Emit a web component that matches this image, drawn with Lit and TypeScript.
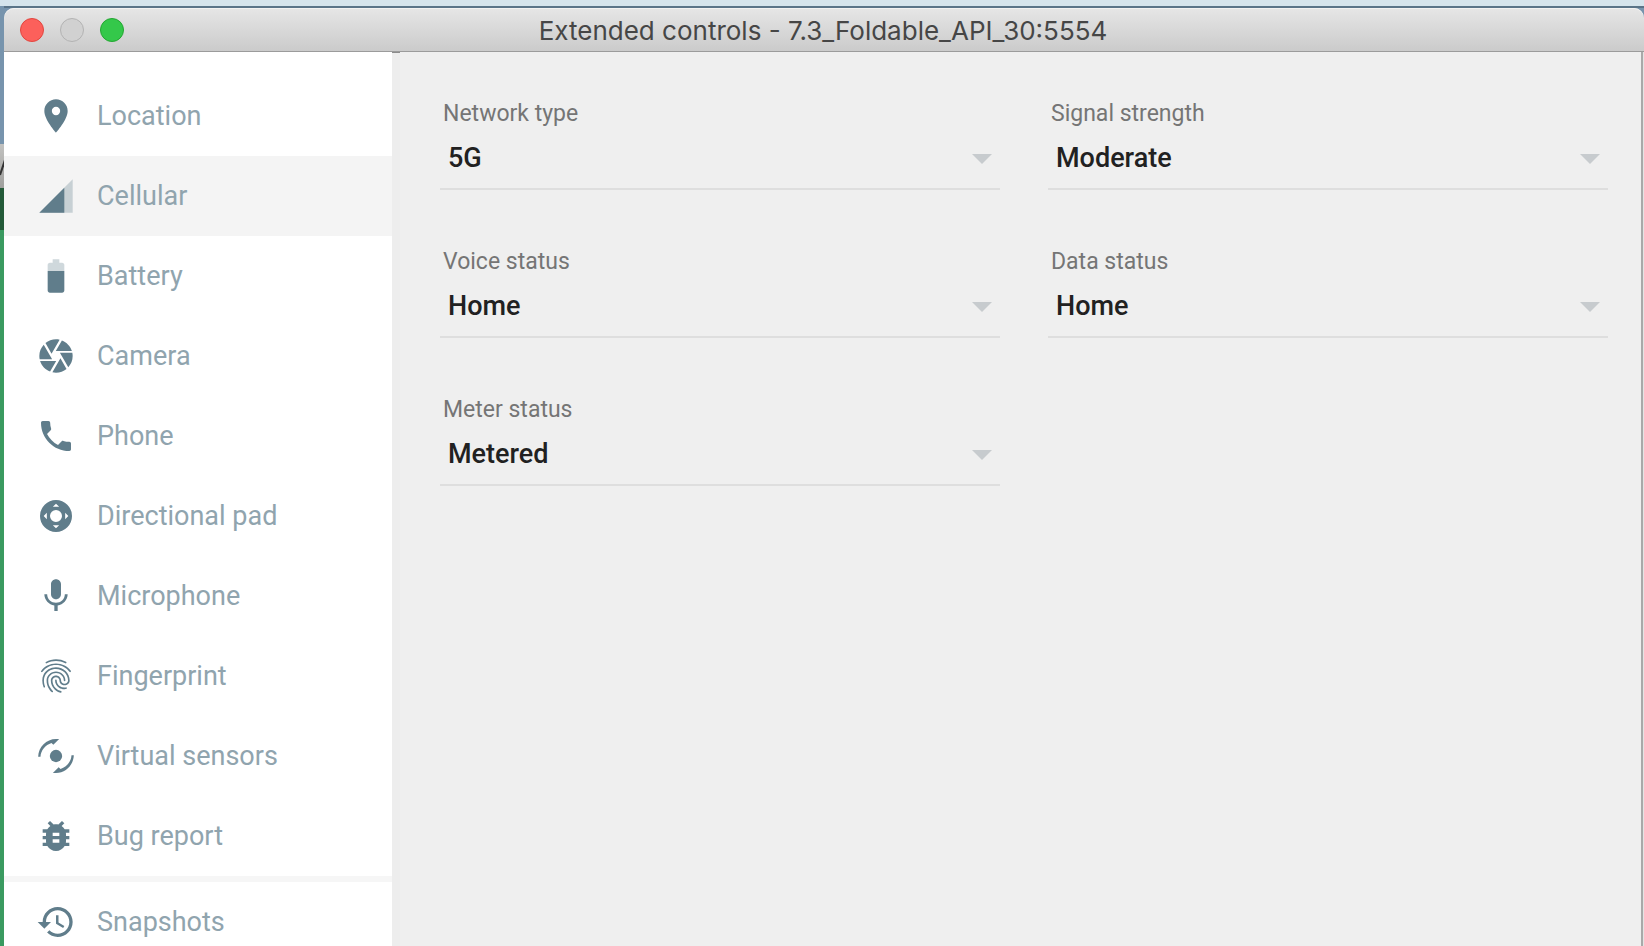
import { LitElement, html, css, svg } from "lit";
import { customElement, property, state } from "lit/decorators.js";

const icons: Record<string, unknown> = {
  location: svg`<path d="M12 2C8.13 2 5 5.13 5 9c0 5.25 7 13 7 13s7-7.75 7-13c0-3.87-3.13-7-7-7zm0 9.5a2.5 2.5 0 0 1 0-5 2.5 2.5 0 0 1 0 5z"/>`,
  cellular: svg`<path opacity=".3" d="M2 22h20V2z"/><path d="M17 7L2 22h15z"/>`,
  battery: svg`<path opacity=".3" d="M17 5.33C17 4.6 16.4 4 15.67 4H14V2h-4v2H8.33C7.6 4 7 4.6 7 5.33V9h10V5.33z"/><path d="M7 9v11.67C7 21.4 7.6 22 8.33 22h7.33c.74 0 1.34-.6 1.34-1.33V9H7z"/>`,
  camera: svg`<path d="M9.4 10.5l4.77-8.26C13.47 2.09 12.75 2 12 2c-2.4 0-4.6.85-6.32 2.25l3.66 6.35.06-.1zM21.54 9c-.92-2.92-3.15-5.26-6-6.34L11.88 9h9.66zm.26 1h-7.49l.29.5 4.76 8.25C21 16.97 22 14.61 22 12c0-.69-.07-1.35-.2-2zM8.54 12l-3.9-6.75C3.01 7.03 2 9.39 2 12c0 .69.07 1.35.2 2h7.49l-1.15-2zm-6.08 3c.92 2.92 3.15 5.26 6 6.34L12.12 15H2.46zm11.27 0l-3.9 6.76c.7.15 1.42.24 2.17.24 2.4 0 4.6-.85 6.32-2.25l-3.66-6.35-.93 1.6z"/>`,
  phone: svg`<path d="M6.62 10.79c1.44 2.83 3.76 5.14 6.59 6.59l2.2-2.2c.27-.27.67-.36 1.02-.24 1.12.37 2.33.57 3.57.57.55 0 1 .45 1 1V20c0 .55-.45 1-1 1-9.39 0-17-7.61-17-17 0-.55.45-1 1-1h3.5c.55 0 1 .45 1 1 0 1.25.2 2.45.57 3.57.11.35.03.74-.25 1.02l-2.2 2.2z"/>`,
  dpad: svg`<path fill-rule="evenodd" d="M12 2.4a9.6 9.6 0 1 0 0 19.2 9.6 9.6 0 0 0 0-19.2zm0 6a3.6 3.6 0 1 1 0 7.2 3.6 3.6 0 0 1 0-7.2zM12 4.6l1.9 1.9h-3.8zM12 19.4l1.9-1.9h-3.8zM4.6 12l1.9-1.9v3.8zM19.4 12l-1.9-1.9v3.8z"/>`,
  mic: svg`<path d="M12 14c1.66 0 2.99-1.34 2.99-3L15 5c0-1.66-1.34-3-3-3S9 3.34 9 5v6c0 1.66 1.34 3 3 3zm5.3-3c0 3-2.54 5.1-5.3 5.1S6.7 14 6.7 11H5c0 3.41 2.72 6.23 6 6.72V21h2v-3.28c3.28-.48 6-3.3 6-6.72h-1.7z"/>`,
  fingerprint: svg`<path d="M17.81 4.47c-.08 0-.16-.02-.23-.06C15.66 3.42 14 3 12.01 3c-1.98 0-3.86.47-5.57 1.41-.24.13-.54.04-.68-.2-.13-.24-.04-.55.2-.68C7.82 2.52 9.86 2 12.01 2c2.13 0 3.99.47 6.03 1.52.25.13.34.43.21.67-.09.18-.26.28-.44.28zM3.5 9.72c-.1 0-.2-.03-.29-.09-.23-.16-.28-.47-.12-.7.99-1.4 2.25-2.5 3.75-3.27C9.98 4.04 14 4.03 17.15 5.65c1.5.77 2.76 1.86 3.75 3.25.16.22.11.54-.12.7-.23.16-.54.11-.7-.12-.9-1.26-2.04-2.25-3.39-2.94-2.87-1.47-6.54-1.47-9.4.01-1.36.7-2.5 1.7-3.4 2.96-.08.14-.23.21-.39.21zm6.25 12.07c-.13 0-.26-.05-.35-.15-.87-.87-1.34-1.43-2.01-2.64-.69-1.23-1.05-2.73-1.05-4.34 0-2.97 2.54-5.39 5.66-5.39s5.66 2.42 5.66 5.39c0 .28-.22.5-.5.5s-.5-.22-.5-.5c0-2.42-2.09-4.39-4.66-4.39-2.57 0-4.66 1.97-4.66 4.39 0 1.44.32 2.77.93 3.85.64 1.15 1.08 1.64 1.85 2.42.19.2.19.51 0 .71-.11.1-.24.15-.37.15zm7.17-1.85c-1.19 0-2.24-.3-3.1-.89-1.49-1.01-2.38-2.65-2.38-4.39 0-.28.22-.5.5-.5s.5.22.5.5c0 1.41.72 2.74 1.94 3.56.71.48 1.54.71 2.54.71.24 0 .64-.03 1.04-.1.27-.05.53.13.58.41.05.27-.13.53-.41.58-.57.11-1.07.12-1.21.12zM14.91 22c-.04 0-.09-.01-.13-.02-1.59-.44-2.63-1.03-3.72-2.1-1.4-1.39-2.17-3.24-2.17-5.22 0-1.62 1.38-2.94 3.08-2.94 1.7 0 3.08 1.32 3.08 2.94 0 1.07.93 1.94 2.08 1.94s2.08-.87 2.08-1.94c0-3.77-3.25-6.83-7.25-6.83-2.84 0-5.44 1.58-6.61 4.03-.39.81-.59 1.76-.59 2.8 0 .78.07 2.01.67 3.61.1.26-.03.55-.29.64-.26.1-.55-.04-.64-.29-.49-1.31-.73-2.61-.73-3.96 0-1.2.23-2.29.68-3.24 1.33-2.79 4.28-4.6 7.51-4.6 4.55 0 8.25 3.51 8.25 7.83 0 1.62-1.38 2.94-3.08 2.94s-3.08-1.32-3.08-2.94c0-1.07-.93-1.94-2.08-1.94s-2.08.87-2.08 1.94c0 1.71.66 3.31 1.87 4.51.95.94 1.86 1.46 3.27 1.85.27.07.42.35.35.61-.05.23-.26.38-.47.38z"/>`,
  sensors: svg`<circle cx="12" cy="12" r="3.7"/><path d="M1.300 12.400C1.500 6.600 6.200 1.800 12 1.800h1.900L10.400 5.300 9.300 4.200C5.600 5.400 2.900 8.600 2.700 12.400z"/><path d="M22.700 11.600C22.500 17.400 17.800 22.200 12 22.200h-1.900L13.600 18.700l1.100 1.100C18.400 18.600 21.100 15.400 21.300 11.600z"/>`,
  bug: svg`<path d="M20 8h-2.81c-.45-.78-1.07-1.45-1.82-1.96L17 4.41 15.59 3l-2.17 2.17C12.96 5.06 12.49 5 12 5c-.49 0-.96.06-1.41.17L8.41 3 7 4.41l1.62 1.63C7.88 6.55 7.26 7.22 6.81 8H4v2h2.09c-.05.33-.09.66-.09 1v1H4v2h2v1c0 .34.04.67.09 1H4v2h2.81c1.04 1.79 2.97 3 5.19 3s4.15-1.21 5.19-3H20v-2h-2.09c.05-.33.09-.66.09-1v-1h2v-2h-2v-1c0-.34-.04-.67-.09-1H20V8zm-6 8h-4v-2h4v2zm0-4h-4v-2h4v2z"/>`,
  history: svg`<path d="M13 3c-4.97 0-9 4.03-9 9H1l3.89 3.89.07.14L9 12H6c0-3.87 3.13-7 7-7s7 3.13 7 7-3.13 7-7 7c-1.93 0-3.68-.79-4.94-2.06l-1.42 1.42C8.27 19.99 10.51 21 13 21c4.97 0 9-4.03 9-9s-4.03-9-9-9zm-1 5v5l4.28 2.54.72-1.21-3.5-2.08V8H12z"/>`,
};

const pages = [
  ["location", "Location"],
  ["cellular", "Cellular"],
  ["battery", "Battery"],
  ["camera", "Camera"],
  ["phone", "Phone"],
  ["dpad", "Directional pad"],
  ["mic", "Microphone"],
  ["fingerprint", "Fingerprint"],
  ["sensors", "Virtual sensors"],
  ["bug", "Bug report"],
  ["history", "Snapshots"],
];

const fields = [
  { id: "network", label: "Network type", value: "5G" },
  { id: "signal", label: "Signal strength", value: "Moderate" },
  { id: "voice", label: "Voice status", value: "Home" },
  { id: "data", label: "Data status", value: "Home" },
  { id: "meter", label: "Meter status", value: "Metered" },
];

@customElement("title-bar")
class TitleBar extends LitElement {
  @property() heading = "";
  static styles = css`
    :host {
      box-sizing: border-box;
      flex: none;
      display: grid;
      grid-template-columns: 1fr auto 1fr;
      align-items: center;
      height: 44px;
      padding: 0 18px 0 16px;
      border-bottom: 1px solid #9b9b9b;
      border-radius: 10px 10px 0 0;
      background: linear-gradient(#e6e6e6, #cbcbcb);
      box-shadow: inset 0 1px #f2f2f2;
    }
    .lights {
      display: flex;
      gap: 16px;
    }
    .light {
      box-sizing: border-box;
      width: 24px;
      height: 24px;
      padding: 0;
      border: 1px solid;
      border-radius: 50%;
    }
    .close { background: #fc605b; border-color: #e2463f; }
    .minimize { background: #d1d1d1; border-color: #b3b3b3; }
    .zoom { background: #34c84a; border-color: #24a732; }
    .heading {
      margin: 0;
      padding-top: 2px;
      color: #464646;
      font: 400 26px/32px Inter, sans-serif;
      white-space: nowrap;
    }
  `;
  render() {
    return html`
      <div class="lights">
        <button class="light close" aria-label="Close"></button>
        <button class="light minimize" aria-label="Minimize"></button>
        <button class="light zoom" aria-label="Zoom"></button>
      </div>
      <h1 class="heading">${this.heading}</h1>
    `;
  }
}

@customElement("side-nav")
class SideNav extends LitElement {
  @state() selected = "cellular";
  static styles = css`
    :host {
      box-sizing: border-box;
      flex: none;
      width: 388px;
      padding-top: 24px;
      overflow: hidden;
      background: #fff;
    }
    .item {
      box-sizing: border-box;
      display: flex;
      align-items: center;
      gap: 21px;
      width: 100%;
      height: 80px;
      padding: 0 32px;
      border: 0;
      background: none;
      color: #90a4ae;
      font: 400 27px/32px Roboto, sans-serif;
      text-align: left;
    }
    .selected { background: #f4f4f4; }
    .icon {
      flex: none;
      width: 40px;
      height: 40px;
      fill: #607d8b;
    }
    .divider {
      height: 6px;
      margin: 0;
      border: 0;
      background: #f6f6f6;
    }
  `;
  render() {
    return html`<nav>
      ${pages.map(
        ([id, label]) => html`
          ${id === "history" ? html`<hr class="divider" />` : ""}
          <button
            class="item ${id === this.selected ? "selected" : ""}"
            @click=${() => (this.selected = id)}
          >
            <svg class="icon" viewBox="0 0 24 24" aria-hidden="true">${icons[id]}</svg>
            <span>${label}</span>
          </button>
        `
      )}
    </nav>`;
  }
}

@customElement("cellular-page")
class CellularPage extends LitElement {
  static styles = css`
    :host {
      box-sizing: border-box;
      flex: 1;
      display: flex;
      min-width: 0;
      background: #efefef;
      font-family: Roboto, sans-serif;
    }
    .gutter {
      box-sizing: border-box;
      flex: none;
      width: 8px;
      border-top: 1px solid #8c8c8c;
      background: #ededed;
    }
    .fields {
      flex: 1;
      display: grid;
      grid-template-columns: 1fr 1fr;
      align-content: start;
      gap: 54px 48px;
      padding: 44px 33px 0 40px;
    }
    .field {
      display: flex;
      flex-direction: column;
    }
    .label {
      padding: 4px 3px;
      color: #757575;
      font-size: 23px;
      line-height: 28px;
    }
    .control {
      display: grid;
      align-items: center;
      border-bottom: 2px solid #dedede;
    }
    .select {
      grid-area: 1 / 1;
      appearance: none;
      height: 56px;
      padding: 0 40px 4px 8px;
      border: 0;
      background: none;
      color: #212121;
      font: 500 27px/32px Roboto, sans-serif;
    }
    .arrow {
      grid-area: 1 / 1;
      justify-self: end;
      width: 20px;
      height: 10px;
      margin: 0 8px 2px 0;
      fill: #c7cbce;
      pointer-events: none;
    }
  `;
  render() {
    return html`
      <div class="gutter"></div>
      <form class="fields">
        ${fields.map(
          (f) => html`
            <div class="field">
              <label class="label" for=${f.id}>${f.label}</label>
              <div class="control">
                <select class="select" id=${f.id}>
                  <option>${f.value}</option>
                </select>
                <svg class="arrow" viewBox="0 0 20 10" aria-hidden="true"><path d="M0 0h20L10 10z" /></svg>
              </div>
            </div>
          `
        )}
      </form>
    `;
  }
}

@customElement("app-root")
class AppRoot extends LitElement {
  static styles = css`
    :host {
      box-sizing: border-box;
      display: flex;
      height: 100vh;
      overflow: hidden;
      border-top: 6px solid #d5e4ec;
      background: #7794ad;
    }
    .behind {
      box-sizing: border-box;
      flex: none;
      display: flex;
      flex-direction: column;
      width: 4px;
      padding-top: 138px;
      overflow: hidden;
      background: #7794ad;
    }
    .strip {
      height: 44px;
      background: linear-gradient(#c2c2c0, #9f9f9d);
    }
    .stroke {
      display: block;
      width: 4px;
      height: 44px;
      stroke: #333;
      stroke-width: 2;
    }
    .dark { height: 42px; background: #235a38; }
    .green { flex: 1; background: #3a9a60; }
    .window {
      flex: 1;
      display: flex;
      flex-direction: column;
      min-width: 0;
      border-top: 2px solid #5a7488;
    }
    .body {
      flex: 1;
      display: flex;
      min-height: 0;
      border-right: 1px solid #e4e4e4;
      background: #efefef;
    }
    .edge {
      flex: none;
      width: 2px;
      background: #a9a9a9;
    }
  `;
  render() {
    return html`
      <div class="behind" aria-hidden="true">
        <div class="strip">
          <svg class="stroke" viewBox="0 0 4 44"><path d="M0 31L5 16" /></svg>
        </div>
        <div class="dark"></div>
        <div class="green"></div>
      </div>
      <div class="window">
        <title-bar heading="Extended controls - 7.3_Foldable_API_30:5554"></title-bar>
        <div class="body">
          <side-nav></side-nav>
          <cellular-page></cellular-page>
          <div class="edge"></div>
        </div>
      </div>
    `;
  }
}
